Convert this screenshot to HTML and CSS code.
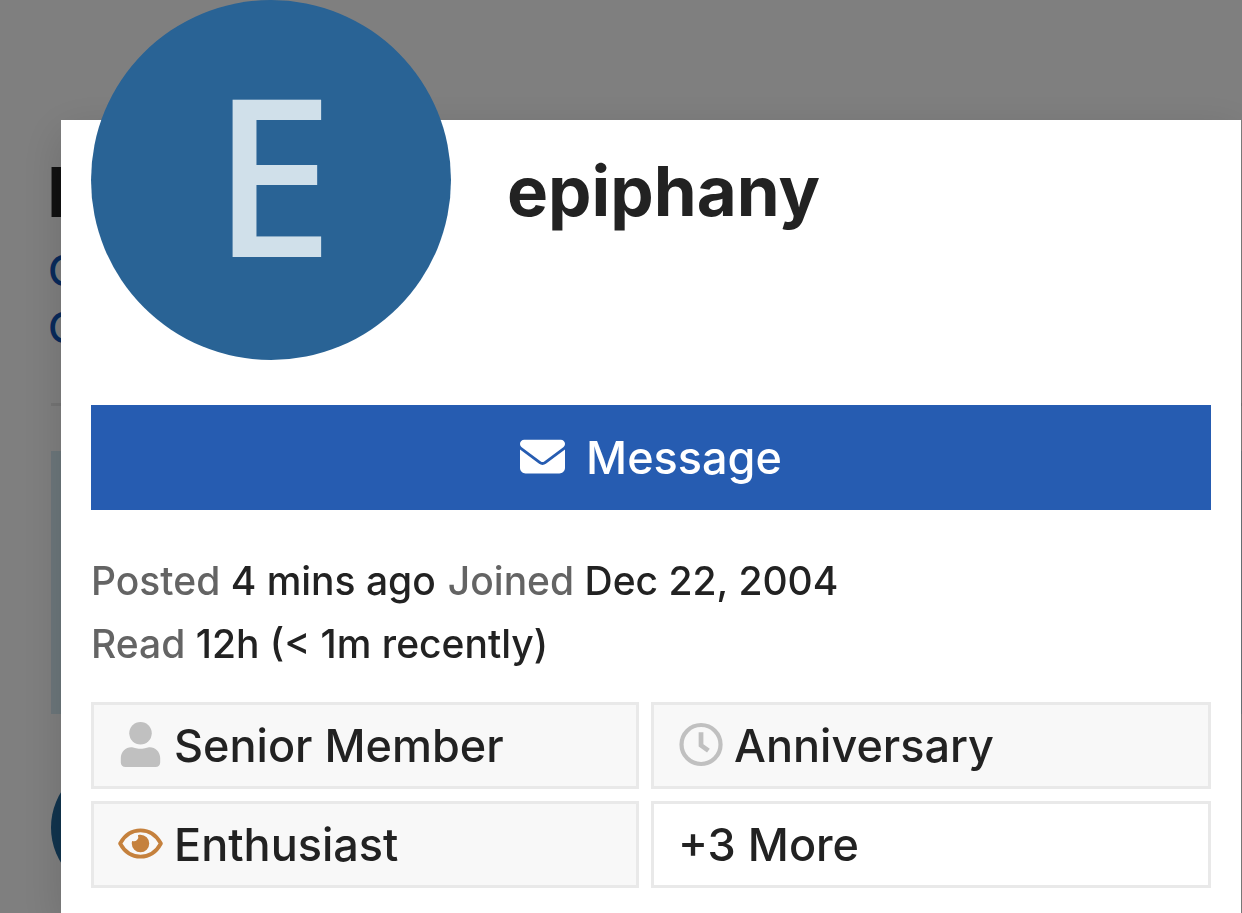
FILE: index.html
```
<!DOCTYPE html>
<html lang="en">
<head>
<meta charset="UTF-8">
<meta name="viewport" content="width=device-width, initial-scale=1.0">
<title>epiphany</title>
<link rel="stylesheet" href="styles.css">
</head>
<body>

<!-- Topic behind the card -->
<div class="topic" aria-hidden="true">
  <div class="topic-title">I</div>
  <div class="topic-link">C</div>
  <div class="topic-link">C</div>
  <div class="topic-rule"></div>
  <div class="topic-notice"></div>
  <div class="topic-avatar"></div>
</div>

<div class="overlay">
  <div class="user-card">
    <div class="card-header">
      <div class="avatar">E</div>
      <h1 class="username">epiphany</h1>
    </div>

    <button type="button" class="message-btn">
      <svg class="icon" viewBox="0 0 512 512" fill="currentColor" aria-hidden="true"><path d="M48 64C21.500 64 0 85.500 0 112c0 15.100 7.100 29.300 19.200 38.400L236.800 313.600c11.400 8.500 27 8.500 38.400 0L492.800 150.400c12.100-9.100 19.200-23.300 19.200-38.400 0-26.500-21.500-48-48-48H48zM0 176V384c0 35.300 28.700 64 64 64H448c35.300 0 64-28.700 64-64V176L294.400 339.200c-22.800 17.100-54 17.100-76.800 0L0 176z"/></svg>
      <span>Message</span>
    </button>

    <div class="metadata">
      <div><span class="desc">Posted</span> 4 mins ago</div>
      <div><span class="desc">Joined</span> Dec 22, 2004</div>
      <div><span class="desc">Read</span> 12h (&lt; 1m recently)</div>
    </div>

    <div class="badges">
      <a href="#" class="badge">
        <svg class="icon grey" viewBox="0 0 512 512" fill="currentColor" aria-hidden="true"><circle cx="256" cy="128" r="128"/><path d="M148 286c-58 0-116 50-116 122v50c0 34 20 54 54 54h340c34 0 54-20 54-54v-50c0-72-58-122-116-122-34 0-52 18-108 18s-74-18-108-18z"/></svg>
        <span>Senior Member</span>
      </a>
      <a href="#" class="badge">
        <svg class="icon grey" viewBox="0 0 512 512" fill="none" stroke="currentColor" stroke-width="48" aria-hidden="true"><circle cx="262" cy="256" r="222"/><path d="M262 118v148l84 60" stroke-width="54"/></svg>
        <span>Anniversary</span>
      </a>
      <a href="#" class="badge">
        <svg class="icon bronze" viewBox="0 0 576 512" fill="currentColor" aria-hidden="true"><path fill="none" stroke="currentColor" stroke-width="48" stroke-linejoin="round" d="M27 256C84 151 181 88 288 88s204 63 261 168c-57 105-154 168-261 168S84 361 27 256z"/><path d="M288 144c-11 0-22 2-33 5a56 56 0 0 1-74 74c-3 11-5 22-5 33a112 112 0 1 0 112-112z"/></svg>
        <span>Enthusiast</span>
      </a>
      <a href="#" class="badge more">+3 More</a>
    </div>
  </div>
</div>

</body>
</html>
```
FILE: styles.css
```
* {
  box-sizing: border-box;
}

body {
  margin: 0;
  height: 100vh;
  overflow: hidden;
  background: #fff;
  color: #222;
  font-family: Inter, "Liberation Sans", sans-serif;
  font-size: 45px;
  font-weight: 500;
}

/* Topic behind the card */
.topic {
  padding: 150px 0 0 51px;
}

.topic-title {
  margin-left: -4px;
  font-size: 69px;
  font-weight: 700;
  line-height: 84px;
}

.topic-link {
  margin-left: -3px;
  color: #1155b8;
  font-size: 42px;
  line-height: 57px;
}

.topic-link + .topic-link {
  margin-bottom: 47px;
}

.topic-title + .topic-link {
  margin-top: 8px;
}

.topic-rule {
  height: 3px;
  margin-bottom: 45px;
  background: #e9e9e9;
}

.topic-notice {
  height: 263px;
  margin-bottom: 46px;
  background: #d9edf7;
}

.topic-avatar {
  width: 135px;
  height: 135px;
  border-radius: 50%;
  background: #22689c;
}

.overlay {
  position: fixed;
  inset: 0;
  padding: 120px 1px 0 61px;
  background: rgba(0, 0, 0, 0.5);
}

/* User card */
.user-card {
  min-height: 100%;
  padding: 0 30px 30px;
  background: #fff;
  box-shadow: 0 12px 42px rgba(0, 0, 0, 0.15);
}

.card-header {
  display: flex;
  align-items: flex-start;
  gap: 56px;
  margin-bottom: 45px;
}

.avatar {
  flex: none;
  width: 360px;
  height: 360px;
  margin-top: -120px;
  padding-left: 4px;
  border-radius: 50%;
  background: #296395;
  color: #d0e0ea;
  font-family: "Noto Sans", sans-serif;
  font-size: 220px;
  font-weight: 500;
  line-height: 344px;
  text-align: center;
}

.username {
  margin: 30px 0 0;
  font-size: 69px;
  font-weight: 700;
  line-height: 82px;
}

.message-btn {
  display: flex;
  align-items: center;
  justify-content: center;
  gap: 21px;
  width: 100%;
  height: 105px;
  margin-bottom: 39px;
  border: none;
  border-radius: 0;
  background: #265cb1;
  color: #fff;
  font: inherit;
  cursor: pointer;
}

.icon {
  flex: none;
  width: 45px;
  height: 45px;
  margin-bottom: 2px;
}

.grey {
  color: #c0c0c0;
}

.bronze {
  color: #c5813d;
}

.metadata {
  display: flex;
  flex-wrap: wrap;
  column-gap: 12px;
  margin-bottom: 27px;
  font-size: 39px;
  line-height: 63px;
}

.desc {
  color: #646464;
}

.badges {
  display: grid;
  grid-template-columns: calc(50% - 12px) 50%;
  gap: 12px;
}

.badge {
  display: flex;
  align-items: center;
  gap: 11px;
  height: 87px;
  padding: 0 24px;
  border: 3px solid #e9e9e9;
  background: #f8f8f8;
  color: #222;
  text-decoration: none;
}

.more {
  background: #fff;
}
```
